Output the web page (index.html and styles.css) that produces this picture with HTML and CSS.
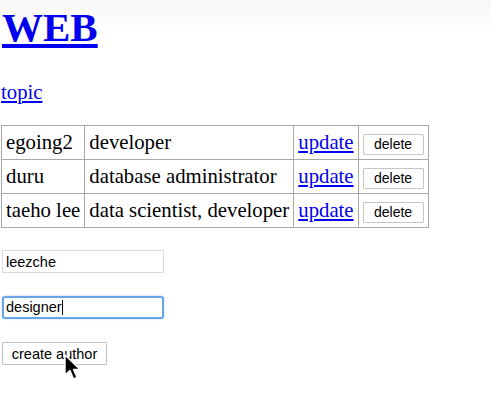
FILE: index.html
```html
<!DOCTYPE html>
<html>
<head>
<meta charset="utf-8">
<title>WEB</title>
<link rel="stylesheet" href="styles.css">
</head>
<body>
<h1 class="title"><a href="#">WEB</a></h1>
<p class="topic"><a href="#">topic</a></p>
<table class="authors">
  <tr><td>egoing2</td><td>developer</td><td><a href="#">update</a></td><td><button class="btn-del">delete</button></td></tr>
  <tr><td>duru</td><td>database administrator</td><td><a href="#">update</a></td><td><button class="btn-del">delete</button></td></tr>
  <tr><td>taeho lee</td><td>data scientist, developer</td><td><a href="#">update</a></td><td><button class="btn-del">delete</button></td></tr>
</table>
<form class="form">
  <div class="field"><input class="inp" type="text" value="leezche"></div>
  <div class="field"><span class="inp inp-focus">designer<span class="caret"></span></span></div>
  <div class="field"><button type="button" class="btn-create">create author</button>
    <svg class="cursor" width="18" height="28" viewBox="0 0 18 28"><path d="M1 1 L1 21 L6 16.5 L9.5 25 L13 23.5 L9.5 15.5 L16 15.5 Z" fill="#000" stroke="#fff" stroke-width="1.4" stroke-linejoin="round"/></svg>
  </div>
</form>
</body>
</html>
```
FILE: styles.css
```css
html, body { margin: 0; padding: 0; }
body {
  font-family: "Liberation Serif", "Times New Roman", serif;
  font-size: 20.75px;
  color: #000;
  background: linear-gradient(#f7f7f7, #ffffff 34px) no-repeat;
  padding-left: 1px;
}
a { color: #0000ee; }
.title {
  font-size: 41px;
  font-weight: bold;
  margin: 3px 0 0 1px;
  line-height: 48px;
}
.topic {
  margin: 29px 0 21px 0;
  line-height: 24px;
}
.authors {
  border-collapse: collapse;
}
.authors td {
  border: 1px solid #a8a8a8;
  padding: 4px 4px;
  line-height: 25px;
  white-space: nowrap;
}
.btn-del {
  font-family: "Liberation Sans", Arial, sans-serif;
  font-size: 14px;
  width: 61px;
  height: 21px;
  background: #fff;
  border: 1px solid #c6c6c6;
  border-radius: 1px;
  padding: 0;
  vertical-align: middle;
  color: #000;
}
.form { margin-top: 22px; }
.field { margin-bottom: 23px; position: relative; height: 23px; }
.inp {
  display: inline-block;
  box-sizing: border-box;
  width: 162px;
  height: 23px;
  margin-left: 1px;
  border: 1px solid #dcdcdc;
  font-family: "Liberation Sans", Arial, sans-serif;
  font-size: 14.5px;
  padding: 0 3px;
  line-height: 21px;
  color: #000;
  background: #fff;
  vertical-align: top;
  outline: none;
}
.inp-focus {
  border: 2px solid #6aa5e8;
  border-radius: 3px;
  box-shadow: 0 0 2px #9cc4f0;
  line-height: 19px;
  padding: 0 2px;
}
.caret {
  display: inline-block;
  width: 1px;
  height: 15px;
  background: #000;
  vertical-align: -3px;
}
.btn-create {
  box-sizing: border-box;
  margin-left: 1px;
  width: 105px;
  height: 23px;
  font-family: "Liberation Sans", Arial, sans-serif;
  font-size: 14.5px;
  background: #fff;
  border: 1px solid #c0c0c0;
  border-radius: 1px;
  padding: 0;
  color: #000;
  vertical-align: top;
}
.cursor {
  position: absolute;
  left: 63px;
  top: 12px;
}
```
